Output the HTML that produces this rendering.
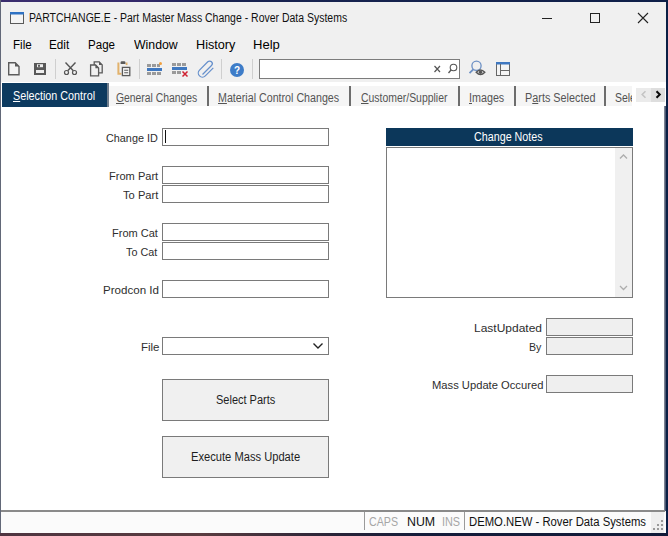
<!DOCTYPE html>
<html><head><meta charset="utf-8">
<style>
*{margin:0;padding:0;box-sizing:border-box}
html,body{width:668px;height:536px;overflow:hidden;background:#1b2340;font-family:"Liberation Sans",sans-serif}
.a{position:absolute}
#win{position:absolute;left:1px;top:2px;width:665px;height:531px;background:#f0f0f0}
.t{position:absolute;white-space:nowrap;line-height:1;color:#1a1a1a;transform-origin:0 0}
.lbl{position:absolute;white-space:nowrap;line-height:1;font-size:11px;color:#3c3c3c;text-align:right}
.box{position:absolute;border:1px solid #7a7a7a;background:#fff}
.gbox{position:absolute;border:1px solid #7a7a7a;background:#efefef}
.sep{position:absolute;width:1px;background:#d0d0d0}
.tsep{position:absolute;width:2px;background:#6d6d6d;top:86px;height:20px}
.tab{position:absolute;white-space:nowrap;line-height:1;font-size:12px;color:#555}
.u{text-decoration:underline}
</style></head><body>
<!-- desktop strips -->
<div class="a" style="left:0;top:0;width:668px;height:2px;background:linear-gradient(90deg,#3b2d6e 0,#33296a 140px,#1a2452 200px,#0e1f48 668px)"></div>
<div class="a" style="left:0;top:0;width:1px;height:536px;background:#626878"></div>
<div class="a" style="left:666px;top:0;width:2px;height:536px;background:#0a1f45"></div>
<div class="a" style="left:0;top:533px;width:668px;height:3px;background:linear-gradient(90deg,#4e3440 0,#5a3c40 200px,#2a2438 330px,#141c3a 420px,#101a38 668px)"></div>

<div id="win"></div>

<!-- title bar -->
<svg class="a" style="left:10px;top:12px" width="14" height="12" viewBox="0 0 14 12">
<rect x="0.5" y="0.5" width="13" height="11" fill="#f4f4f4" stroke="#5a5a5a" stroke-width="1"/>
<rect x="0" y="0" width="14" height="2.5" fill="#2f72c4"/>
</svg>
<div class="a" style="left:542px;top:18px;width:10px;height:1px;background:#222"></div>
<div class="a" style="left:590px;top:13px;width:10px;height:10px;border:1px solid #222"></div>
<svg class="a" style="left:637px;top:12px" width="12" height="12" viewBox="0 0 12 12"><path d="M1 1L11 11M11 1L1 11" stroke="#222" stroke-width="1.1"/></svg>

<!-- menu -->

<!-- toolbar -->
<svg class="a" style="left:0;top:56px" width="530" height="26" viewBox="0 56 530 26">
 <!-- new -->
 <path d="M8.7 62.7h6.5l3.8 3.8v8.3h-10.3z" fill="#f3f3f3" stroke="#5c5c5c" stroke-width="1.4"/>
 <path d="M15 62.3l4.2 4.2h-4.2z" fill="#5c5c5c"/>
 <!-- save -->
 <rect x="34" y="63" width="12" height="12" fill="#585858"/>
 <rect x="37" y="64.2" width="6" height="3" fill="#ededed"/>
 <rect x="38" y="64.8" width="2" height="2" fill="#585858"/>
 <rect x="36" y="70" width="8" height="3" fill="#ededed"/>
 <rect x="55" y="59" width="1" height="20" fill="#cfcfcf"/>
 <!-- scissors -->
 <g stroke="#555" fill="none" stroke-width="1.2">
 <path d="M65.5 62.5l7.8 8.3M75.5 62.5l-7.8 8.3" stroke-width="1.4"/>
 <circle cx="66.5" cy="72.5" r="2"/>
 <circle cx="74.5" cy="72.5" r="2"/>
 </g>
 <!-- copy -->
 <path d="M94.2 61.9h5l3 3v7.9h-8z" fill="#f0f0f0" stroke="#5a5a5a" stroke-width="1.3"/>
 <path d="M99 61.5l3.6 3.6h-3.6z" fill="#5a5a5a"/>
 <path d="M90.6 65h5l3 3v7.9h-8z" fill="#f0f0f0" stroke="#5a5a5a" stroke-width="1.3"/>
 <path d="M95.4 64.6l3.6 3.6h-3.6z" fill="#5a5a5a"/>
 <!-- paste -->
 <path d="M118.4 62.5v11.3h3" fill="none" stroke="#e2b26c" stroke-width="2"/>
 <path d="M126.6 62.5v2.6" stroke="#e2b26c" stroke-width="1.8"/>
 <path d="M120.6 64v-1.6q0-1.2 1.2-1.2h2.4q1.2 0 1.2 1.2v1.6z" fill="#5a5a5a"/>
 <rect x="122.4" y="67.4" width="7.4" height="8.2" fill="#f4f4f4" stroke="#5a5a5a" stroke-width="1.3"/>
 <path d="M124.2 70.2h4M124.2 72.8h4" stroke="#5a5a5a" stroke-width="1.1"/>
 <rect x="139" y="59" width="1" height="20" fill="#cfcfcf"/>
 <!-- insert row -->
 <rect x="147" y="64" width="4" height="3" fill="#9a9a9a"/><rect x="152" y="64" width="4" height="3" fill="#9a9a9a"/><rect x="157" y="64" width="3" height="3" fill="#9a9a9a"/>
 <circle cx="160.5" cy="63.5" r="1.5" fill="#f0a040"/>
 <rect x="147" y="68" width="15" height="3" fill="#3f78c0"/>
 <rect x="147" y="72" width="4" height="3" fill="#9a9a9a"/><rect x="152" y="72" width="4" height="3" fill="#9a9a9a"/><rect x="157" y="72" width="4" height="3" fill="#9a9a9a"/>
 <!-- delete row -->
 <rect x="172" y="63" width="4" height="3" fill="#9a9a9a"/><rect x="177" y="63" width="4" height="3" fill="#9a9a9a"/><rect x="182" y="63" width="4" height="3" fill="#9a9a9a"/>
 <rect x="172" y="67" width="15" height="3" fill="#3f78c0"/>
 <rect x="172" y="71" width="4" height="3" fill="#9a9a9a"/><rect x="177" y="71" width="4" height="3" fill="#9a9a9a"/>
 <path d="M182.5 71.5l5 5M187.5 71.5l-5 5" stroke="#d02030" stroke-width="1.5"/>
 <!-- paperclip -->
 <path d="M202.5 74.5l9-9a2.6 2.6 0 0 0 -3.7 -3.7l-8.3 8.3a4.1 4.1 0 0 0 5.8 5.8l8-8" fill="none" stroke="#6690cc" stroke-width="1.25"/>
 <rect x="221" y="59" width="1" height="20" fill="#cfcfcf"/>
 <!-- help -->
 <circle cx="237" cy="70" r="7" fill="#3d7cc8"/>
 <text x="237" y="74" font-family="Liberation Sans" font-size="10" font-weight="bold" fill="#fff" text-anchor="middle">?</text>
 <rect x="252" y="59" width="1" height="20" fill="#cfcfcf"/>
</svg>
<div class="box" style="left:259px;top:59px;width:201px;height:20px;border-color:#7c7c7c"></div>
<svg class="a" style="left:430px;top:60px" width="32" height="18" viewBox="430 60 32 18">
 <path d="M434.5 66l5.5 6M440 66l-5.5 6" stroke="#555" stroke-width="1.2"/>
 <circle cx="453.5" cy="67.5" r="3.3" fill="none" stroke="#555" stroke-width="1.1"/>
 <path d="M451 70l-2.5 3" stroke="#555" stroke-width="1.3"/>
</svg>
<svg class="a" style="left:466px;top:58px" width="50" height="22" viewBox="466 58 50 22">
 <circle cx="476.5" cy="65.8" r="4.6" fill="none" stroke="#6b8fc4" stroke-width="1.3"/>
 <path d="M473.3 69.3l-3.8 3.8" stroke="#6b8fc4" stroke-width="1.8"/>
 <path d="M476.2 72.3q4.3 -4.6 8.6 0q-4.3 4.6 -8.6 0z" fill="#f0f0f0" stroke="#555" stroke-width="1.4"/>
 <circle cx="480.5" cy="72.3" r="1.7" fill="#555"/>
 <rect x="496.5" y="62.5" width="13" height="13" fill="#f4f4f4" stroke="#666"/>
 <rect x="496" y="62" width="14" height="2.5" fill="#3f78c0"/>
 <path d="M500.5 64v11M500.5 70.5h9" stroke="#666"/>
</svg>

<!-- tab strip -->
<div class="a" style="left:1px;top:82px;width:665px;height:26px;background:#fff"></div>
<div class="a" style="left:108px;top:86px;width:524px;height:20px;background:#f5f5f5"></div>
<div class="a" style="left:2px;top:83px;width:105px;height:24px;background:#0d3a5f"></div>
<div class="a" style="left:107px;top:83px;width:2px;height:24px;background:#6f7d8c"></div>
<div class="tsep" style="left:207px"></div>
<div class="tsep" style="left:349px"></div>
<div class="tsep" style="left:458px"></div>
<div class="tsep" style="left:514px"></div>
<div class="tsep" style="left:604px"></div>
<div class="a" style="left:612px;top:86px;width:20px;height:20px;overflow:hidden"><div class="t" style="left:3px;top:6px;font-size:12px;color:#505050;transform:scaleX(0.87)">Selected</div></div>
<div class="a" style="left:636px;top:88px;width:15px;height:14px;background:#ebebeb"></div>
<div class="a" style="left:651px;top:88px;width:14px;height:14px;background:#dedede"></div>
<svg class="a" style="left:636px;top:88px" width="30" height="14" viewBox="0 0 30 14">
 <path d="M9.5 3.2l-3.3 3.3l3.3 3.3" fill="none" stroke="#c4c4c4" stroke-width="1.6"/>
 <path d="M20.5 3.2l3.3 3.3l-3.3 3.3" fill="none" stroke="#0a0a0a" stroke-width="2"/>
</svg>

<!-- content -->
<div class="a" style="left:1px;top:108px;width:663px;height:402px;background:#fff"></div>
<div class="a" style="left:664px;top:106px;width:2px;height:405px;background:linear-gradient(90deg,#7c8292 50%,#4c5872 50%)"></div>

<div class="box" style="left:162px;top:128px;width:167px;height:18px"></div>
<div class="a" style="left:165px;top:130px;width:1px;height:13px;background:#111"></div>

<div class="box" style="left:162px;top:166px;width:167px;height:18px"></div>
<div class="box" style="left:162px;top:185px;width:167px;height:18px"></div>

<div class="box" style="left:162px;top:223px;width:167px;height:18px"></div>
<div class="box" style="left:162px;top:242px;width:167px;height:18px"></div>

<div class="box" style="left:162px;top:280px;width:167px;height:18px"></div>

<div class="box" style="left:162px;top:337px;width:167px;height:18px"></div>
<svg class="a" style="left:312px;top:342px" width="12" height="8" viewBox="0 0 12 8"><path d="M1.5 1.5l4.5 4.5l4.5-4.5" fill="none" stroke="#222" stroke-width="1.4"/></svg>

<div class="gbox" style="left:162px;top:379px;width:167px;height:42px;background:#f0f0f0"></div>
<div class="gbox" style="left:162px;top:436px;width:167px;height:42px;background:#f0f0f0"></div>

<!-- notes -->
<div class="a" style="left:386px;top:128px;width:247px;height:18px;background:#0c375a"></div>
<div class="box" style="left:386px;top:147px;width:247px;height:151px"></div>
<div class="a" style="left:615px;top:148px;width:17px;height:149px;background:#f0f0f0"></div>
<svg class="a" style="left:615px;top:148px" width="17" height="149" viewBox="0 0 17 149">
 <path d="M5 10.5l3.5-3.5l3.5 3.5" fill="none" stroke="#adadad" stroke-width="1.3"/>
 <path d="M5 138l3.5 3.5l3.5-3.5" fill="none" stroke="#adadad" stroke-width="1.3"/>
</svg>

<div class="gbox" style="left:546px;top:318px;width:87px;height:18px"></div>
<div class="gbox" style="left:546px;top:337px;width:87px;height:18px"></div>
<div class="gbox" style="left:546px;top:375px;width:87px;height:18px"></div>

<!-- status bar -->
<div class="a" style="left:1px;top:510px;width:664px;height:2px;background:#8a8a8a"></div>
<div class="a" style="left:1px;top:512px;width:665px;height:21px;background:#fbfbfb"></div>
<div class="a" style="left:364px;top:512px;width:1px;height:18px;background:#9a9a9a"></div>
<div class="a" style="left:464px;top:512px;width:1px;height:18px;background:#9a9a9a"></div>
<div class="a" style="left:651px;top:512px;width:13px;height:21px;background:#eeeeee"></div>
<svg class="a" style="left:651px;top:518px" width="14" height="13" viewBox="0 0 14 13">
 <rect x="10" y="2" width="2" height="2" fill="#999"/>
 <rect x="6" y="6" width="2" height="2" fill="#999"/><rect x="10" y="6" width="2" height="2" fill="#999"/>
 <rect x="2" y="10" width="2" height="2" fill="#999"/><rect x="6" y="10" width="2" height="2" fill="#999"/><rect x="10" y="10" width="2" height="2" fill="#999"/>
</svg>
<div class="t" style="left:29.13px;top:12px;font-size:12px;color:#111111;transform:scaleX(0.8733);">PARTCHANGE.E - Part Master Mass Change - Rover Data Systems</div>
<div class="t" style="left:12.63px;top:39px;font-size:12px;color:#000000;transform:scaleX(0.9667);">File</div>
<div class="t" style="left:49.32px;top:39px;font-size:12px;color:#000000;transform:scaleX(0.9750);">Edit</div>
<div class="t" style="left:88.04px;top:39px;font-size:12px;color:#000000;transform:scaleX(0.9630);">Page</div>
<div class="t" style="left:134.00px;top:39px;font-size:12px;color:#000000;transform:scaleX(1.0233);">Window</div>
<div class="t" style="left:195.94px;top:39px;font-size:12px;color:#000000;transform:scaleX(1.0556);">History</div>
<div class="t" style="left:252.91px;top:39px;font-size:12px;color:#000000;transform:scaleX(1.0870);">Help</div>
<div class="t" style="left:12.60px;top:90px;font-size:12px;color:#ffffff;transform:scaleX(0.8978);"><u>S</u>election Control</div>
<div class="t" style="left:115.80px;top:92px;font-size:12px;color:#545454;transform:scaleX(0.8638);"><u>G</u>eneral Changes</div>
<div class="t" style="left:217.81px;top:92px;font-size:12px;color:#545454;transform:scaleX(0.8904);"><u>M</u>aterial Control Changes</div>
<div class="t" style="left:360.70px;top:92px;font-size:12px;color:#545454;transform:scaleX(0.8700);"><u>C</u>ustomer/Supplier</div>
<div class="t" style="left:469.11px;top:92px;font-size:12px;color:#545454;transform:scaleX(0.8947);"><u>I</u>mages</div>
<div class="t" style="left:524.50px;top:92px;font-size:12px;color:#545454;transform:scaleX(0.9026);">P<u>a</u>rts Selected</div>
<div class="t" style="left:105.80px;top:133px;font-size:11px;color:#2e2e2e;transform:scaleX(0.9846);">Change ID</div>
<div class="t" style="left:108.69px;top:171px;font-size:11px;color:#2e2e2e;transform:scaleX(1.0062);">From Part</div>
<div class="t" style="left:122.50px;top:190px;font-size:11px;color:#2e2e2e;transform:scaleX(1.0143);">To Part</div>
<div class="t" style="left:111.60px;top:228px;font-size:11px;color:#2e2e2e;transform:scaleX(1.0022);">From Cat</div>
<div class="t" style="left:126.30px;top:247px;font-size:11px;color:#2e2e2e;transform:scaleX(0.9812);">To Cat</div>
<div class="t" style="left:102.65px;top:285px;font-size:11px;color:#2e2e2e;transform:scaleX(1.0519);">Prodcon Id</div>
<div class="t" style="left:140.66px;top:342px;font-size:11px;color:#2e2e2e;transform:scaleX(1.0438);">File</div>
<div class="t" style="left:474.41px;top:323px;font-size:11px;color:#2e2e2e;transform:scaleX(1.0902);">LastUpdated</div>
<div class="t" style="left:529.43px;top:342px;font-size:11px;color:#2e2e2e;transform:scaleX(0.9667);">By</div>
<div class="t" style="left:432.38px;top:380px;font-size:11px;color:#2e2e2e;transform:scaleX(1.0176);">Mass Update Occured</div>
<div class="t" style="left:216.48px;top:394px;font-size:12px;color:#1e1e1e;transform:scaleX(0.9156);">Select Parts</div>
<div class="t" style="left:191.27px;top:451px;font-size:12px;color:#1e1e1e;transform:scaleX(0.9293);">Execute Mass Update</div>
<div class="t" style="left:474.20px;top:131px;font-size:12px;color:#ffffff;transform:scaleX(0.8948);">Change Notes</div>
<div class="t" style="left:369.40px;top:516px;font-size:12px;color:#a6a6a6;transform:scaleX(0.8875);">CAPS</div>
<div class="t" style="left:406.57px;top:516px;font-size:12px;color:#111111;transform:scaleX(1.0308);">NUM</div>
<div class="t" style="left:441.59px;top:516px;font-size:12px;color:#a6a6a6;transform:scaleX(0.9053);">INS</div>
<div class="t" style="left:469.06px;top:516px;font-size:12px;color:#111111;transform:scaleX(0.9412);">DEMO.NEW - Rover Data Systems</div>
</body></html>
